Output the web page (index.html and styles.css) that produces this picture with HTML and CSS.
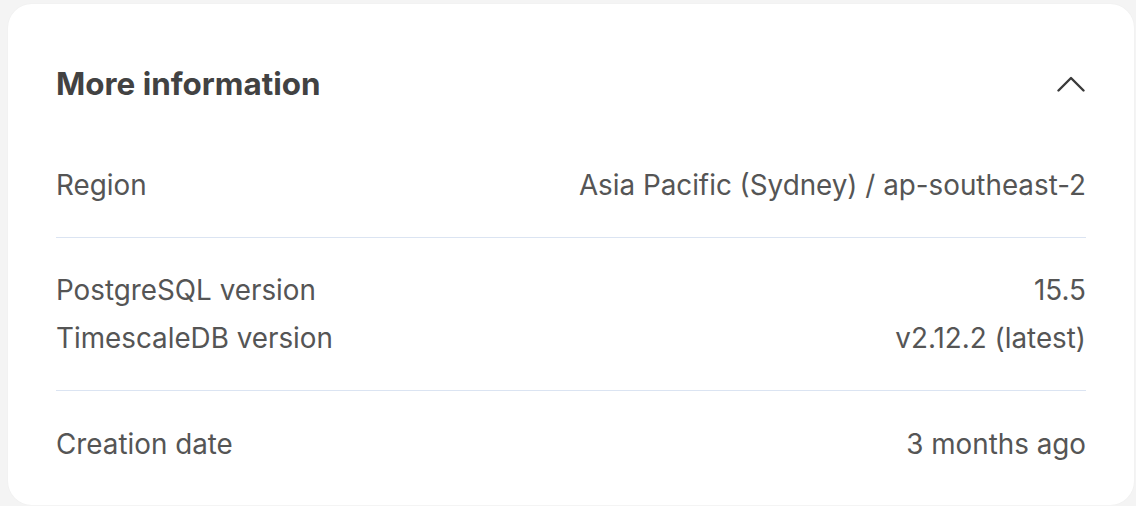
FILE: index.html
```html
<!DOCTYPE html>
<html>
<head>
<meta charset="utf-8">
<link rel="stylesheet" href="styles.css">
</head>
<body>
<div class="card">
  <div class="header">
    <h2 class="title">More information</h2>
    <svg class="chevron" width="28" height="18" viewBox="0 0 28 18"><polyline points="1.5,15.5 14,3 26.5,15.5" fill="none" stroke="#3a3a3a" stroke-width="2.4" stroke-linecap="round" stroke-linejoin="round"/></svg>
  </div>
  <div class="section">
    <div class="row"><span>Region</span><span>Asia Pacific (Sydney) / ap-southeast-2</span></div>
  </div>
  <div class="section">
    <div class="row"><span>PostgreSQL version</span><span>15.5</span></div>
    <div class="row"><span>TimescaleDB version</span><span>v2.12.2 (latest)</span></div>
  </div>
  <div class="section last">
    <div class="row"><span>Creation date</span><span>3 months ago</span></div>
  </div>
</div>
</body>
</html>
```

FILE: styles.css
```css
html, body {
  margin: 0;
  padding: 0;
  background: #f4f4f4;
}
body {
  padding: 4px 2px 0 8px;
  font-family: Inter, "Noto Sans", sans-serif;
}
.card {
  background: #ffffff;
  border-radius: 24px;
  padding: 48px 48px 8px 48px;
  box-shadow: 0 0 2px rgba(0,0,0,0.04);
}
.header {
  display: flex;
  align-items: center;
  justify-content: space-between;
  height: 64px;
  margin-bottom: 17px;
}
.title {
  margin: 0;
  font-size: 31.4px;
  font-weight: 700;
  color: #424242;
}
.chevron {
  margin-right: 1px;
}
.section {
  padding: 28px 0;
  border-bottom: 1px solid #dbe4f2;
}
.section.last {
  border-bottom: none;
  padding-bottom: 29px;
}
.row {
  display: flex;
  justify-content: space-between;
  line-height: 48px;
  font-size: 27.8px;
  color: #555555;
}
.section.last .row {
  padding-top: 1px;
}
```
